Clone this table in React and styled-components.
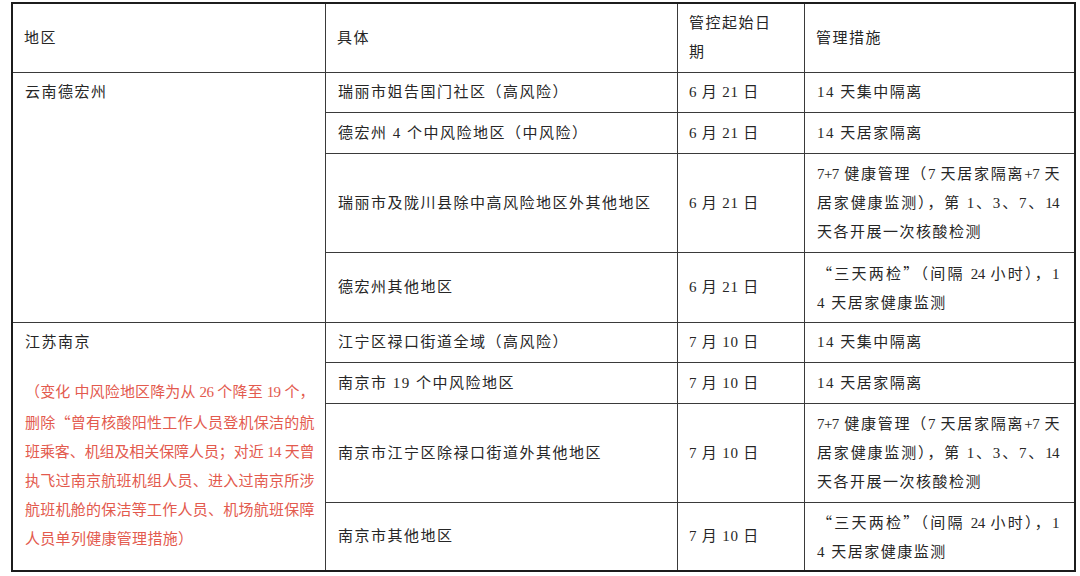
import React from "react";
import styled, { createGlobalStyle } from "styled-components";

const Global = createGlobalStyle`
  html, body { margin: 0; padding: 0; background: #ffffff; }
  body {
    width: 1080px;
    height: 576px;
    overflow: hidden;
    font-family: "Liberation Serif", "Noto Sans CJK SC", serif;
  }
`;

const Page = styled.div`
  padding: 2px 0 0 11px;
`;

const Table = styled.div`
  width: 1061px;
  border: 2px solid #1c1c1c;
  background: #3a3a3a;
  display: grid;
  grid-template-columns: 312px 351px 126px 269px;
  grid-template-rows: 68px 39px 40px 98px 69px 39px 40px 98px 67px;
  gap: 1px;
`;

const Cell = styled.div`
  background: #ffffff;
  color: #262626;
  font-size: 15px;
  line-height: 29px;
  letter-spacing: ${(p) => (p.$spacing ?? 1.5)}px;
  padding: ${(p) => (p.$top ? "5px" : "0")} ${(p) => p.$right || 11}px 0 ${(p) => p.$left || 12}px;
  display: flex;
  flex-direction: column;
  justify-content: ${(p) => (p.$top ? "flex-start" : "center")};
  grid-row: ${(p) => (p.$span ? `span ${p.$span}` : "auto")};
  min-width: 0;
  overflow: hidden;
`;

const Line = styled.span`
  display: block;
  white-space: nowrap;
  text-align: ${(p) => (p.$justify ? "justify" : "left")};
  text-align-last: ${(p) => (p.$justify ? "justify" : "left")};
  letter-spacing: ${(p) => (p.$justify ? "-0.6px" : "inherit")};
`;

const Quote = styled.span`
  font-family: "Noto Sans CJK SC", sans-serif;
`;

const Note = styled.div`
  margin-top: 21px;
  color: #e35a4e;
  font-size: 15px;
  line-height: 29px;
  letter-spacing: 0.3px;
`;

const headers = [["地区"], ["具体"], ["管控起始日", "期"], ["管理措施"]];

const measure77 = [
  "7+7 健康管理（7 天居家隔离+7 天",
  "居家健康监测），第 1、3、7、14",
  "天各开展一次核酸检测",
];
const measure32 = [
  <>
    <Quote>“</Quote>三天两检<Quote>”</Quote>（间隔 24 小时），1
  </>,
  "4 天居家健康监测",
];

const groups = [
  {
    region: "云南德宏州",
    rows: [
      { area: "瑞丽市姐告国门社区（高风险）", date: "6 月 21 日", measure: ["14 天集中隔离"] },
      { area: "德宏州 4 个中风险地区（中风险）", date: "6 月 21 日", measure: ["14 天居家隔离"] },
      { area: "瑞丽市及陇川县除中高风险地区外其他地区", date: "6 月 21 日", measure: measure77 },
      { area: "德宏州其他地区", date: "6 月 21 日", measure: measure32 },
    ],
  },
  {
    region: "江苏南京",
    note: [
      "（变化 中风险地区降为从 26 个降至 19 个，",
      <>
        删除<Quote>“</Quote>曾有核酸阳性工作人员登机保洁的航
      </>,
      "班乘客、机组及相关保障人员；对近 14 天曾",
      "执飞过南京航班机组人员、进入过南京所涉",
      "航班机舱的保洁等工作人员、机场航班保障",
      "人员单列健康管理措施）",
    ],
    rows: [
      { area: "江宁区禄口街道全域（高风险）", date: "7 月 10 日", measure: ["14 天集中隔离"] },
      { area: "南京市 19 个中风险地区", date: "7 月 10 日", measure: ["14 天居家隔离"] },
      { area: "南京市江宁区除禄口街道外其他地区", date: "7 月 10 日", measure: measure77 },
      { area: "南京市其他地区", date: "7 月 10 日", measure: measure32 },
    ],
  },
];

function Lines({ lines, justify }) {
  return lines.map((l, i) => (
    <Line key={i} $justify={justify && lines.length > 1 && i < lines.length - 1}>
      {l}
    </Line>
  ));
}

export default function App() {
  return (
    <>
      <Global />
      <Page>
        <Table>
          {headers.map((h, i) => (
            <Cell key={`h${i}`} $left={11}>
              <Lines lines={h} />
            </Cell>
          ))}
          {groups.map((g) => (
            <React.Fragment key={g.region}>
              <Cell $span={g.rows.length} $top>
                <Line>{g.region}</Line>
                {g.note && (
                  <Note>
                    <Lines lines={g.note} justify />
                  </Note>
                )}
              </Cell>
              {g.rows.map((r) => (
                <React.Fragment key={r.area}>
                  <Cell>
                    <Line>{r.area}</Line>
                  </Cell>
                  <Cell $left={11} $spacing={0.8}>
                    <Line>{r.date}</Line>
                  </Cell>
                  <Cell $right={15}>
                    <Lines lines={r.measure} justify />
                  </Cell>
                </React.Fragment>
              ))}
            </React.Fragment>
          ))}
        </Table>
      </Page>
    </>
  );
}
